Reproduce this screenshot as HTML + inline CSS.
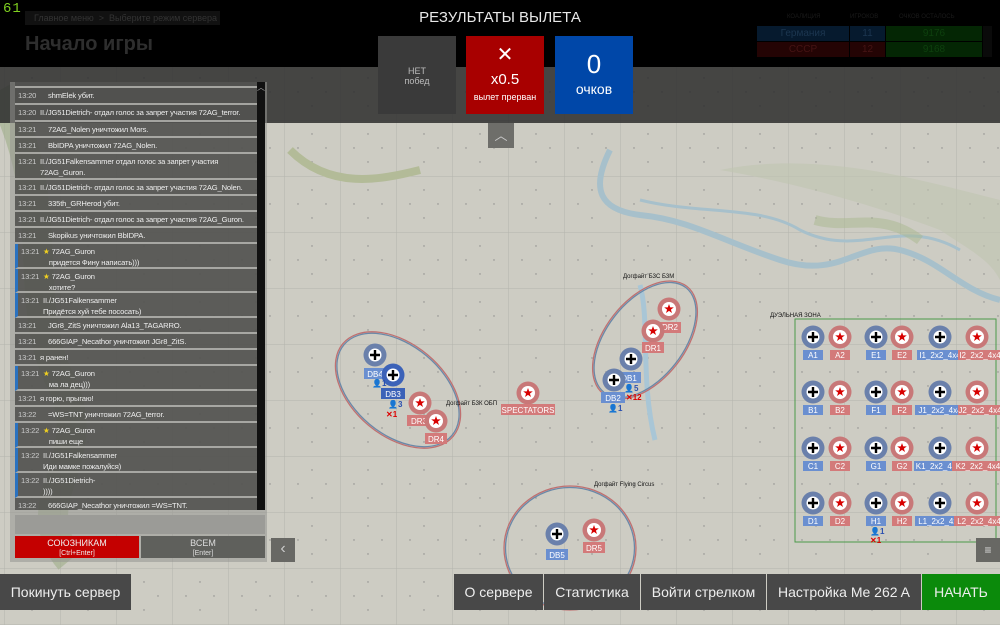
<!DOCTYPE html>
<html><head><meta charset="utf-8"><style>
*{margin:0;padding:0;box-sizing:border-box}
body{width:1000px;height:625px;overflow:hidden;background:#cdccc3;font-family:"Liberation Sans","DejaVu Sans",sans-serif;position:relative}
.abs{position:absolute}
#chat{position:absolute;left:10px;top:82px;width:257px;height:480px;background:rgba(150,150,145,0.55)}
.rows{position:absolute;left:5px;top:0;width:242px;height:428px;overflow:hidden}
.r{position:absolute;left:0;width:242px;background:rgba(75,75,72,0.82);border-bottom:2px solid rgba(200,200,195,0.7);color:#eee;font-size:7.6px;letter-spacing:-0.15px;line-height:11px;padding:2px 0 0 3px}
.r.b{border-left:3px solid #2a72c0}
.r .t{position:absolute;left:3px;color:#ccc}
.r .m{position:absolute;left:33px;white-space:nowrap}
.r .m2{position:absolute;left:25px;white-space:nowrap}
.s{color:#f0d020}
.btn{position:absolute;top:574px;height:36px;background:#484848;color:#eee;font-size:14px;line-height:36px;text-align:center}
</style></head><body>
<svg class="abs" style="left:0;top:0" width="1000" height="625">
<defs><pattern id="g" width="56" height="56" patternUnits="userSpaceOnUse" x="4" y="8"><path d="M0 0H56M0 0V56" stroke="#b4b4ac" stroke-width="1" fill="none"/><circle cx="14" cy="28" r=".7" fill="#888"/><circle cx="42" cy="28" r=".7" fill="#888"/><circle cx="28" cy="14" r=".7" fill="#888"/><circle cx="28" cy="42" r=".7" fill="#888"/></pattern></defs>
<rect width="1000" height="625" fill="url(#g)"/>
<path d="M0 90 C60 200 20 300 60 380 S20 500 70 560" stroke="#9fae88" stroke-width="30" fill="none" opacity=".6"/>
<path d="M290 150 C330 190 380 180 420 170" stroke="#b3bb98" stroke-width="8" fill="none"/>
<path d="M610 150 C590 190 600 210 640 215 C690 220 720 240 780 260 C840 280 860 240 900 250 C940 260 960 290 1000 300" stroke="#a7c0cb" stroke-width="6" fill="none"/>
<path d="M640 200 C700 215 760 205 800 230 C860 260 900 215 960 250" stroke="#a7c0cb" stroke-width="3" fill="none"/>
<path d="M720 170 C780 180 860 200 940 230 C970 250 990 260 1000 280 L1000 200 C920 180 820 150 720 170Z" fill="#bfc4b0" opacity=".6"/>
<path d="M815 220 C850 230 880 210 920 240" stroke="#aab890" stroke-width="10" fill="none" opacity=".5"/>
<path d="M640 285 C650 320 640 380 655 440" stroke="#a9c6d6" stroke-width="5" fill="none"/>
<g fill="none" stroke-width="1.3">
<ellipse cx="398" cy="390" rx="72" ry="46" transform="rotate(40 398 390)" stroke="#c07070"/>
<ellipse cx="398" cy="390" rx="70.5" ry="44.5" transform="rotate(40 398 390)" stroke="#6a88a8"/>
<ellipse cx="645" cy="340" rx="68" ry="40" transform="rotate(-52 645 340)" stroke="#c07070"/>
<ellipse cx="645" cy="340" rx="66.5" ry="38.5" transform="rotate(-52 645 340)" stroke="#6a88a8"/>
<ellipse cx="570" cy="548" rx="66" ry="62" stroke="#c07070"/>
<ellipse cx="570" cy="548" rx="64.5" ry="60.5" stroke="#6a88a8"/>
</g>
<rect x="795" y="319" width="201" height="223" fill="none" stroke="#4a9a4a" stroke-width="1"/>
<rect x="0" y="67" width="1000" height="56" fill="rgba(45,45,45,0.85)"/>
<rect x="0" y="0" width="1000" height="67" fill="#000"/>
</svg>

<div class="abs" style="left:3px;top:1px;color:#7fd020;font-family:'Liberation Mono',monospace;font-size:14px;letter-spacing:1px">61</div>
<div class="abs" style="left:25px;top:11px;width:195px;height:14px;background:#111;color:#333;font-size:9px;line-height:14px;padding-left:9px;white-space:nowrap;overflow:hidden">Главное меню &nbsp;&gt;&nbsp; Выберите режим сервера</div>
<div class="abs" style="left:25px;top:33px;color:#2e2e2e;font-size:20px;font-weight:bold">Начало игры</div>
<div class="abs" style="left:0;top:9px;width:1000px;text-align:center;color:#e8e8e8;font-size:15px">РЕЗУЛЬТАТЫ ВЫЛЕТА</div>
<div class="abs" style="left:378px;top:36px;width:78px;height:78px;background:#3a3a3a;color:#bbb;font-size:9px;text-align:center;padding-top:30px;line-height:10px">НЕТ<br>побед</div>
<div class="abs" style="left:466px;top:36px;width:78px;height:78px;background:#a80000;color:#fff;text-align:center"><div style="font-size:20px;margin-top:9px;line-height:20px">✕</div><div style="font-size:15px;margin-top:6px">x0.5</div><div style="font-size:9px;margin-top:4px">вылет прерван</div></div>
<div class="abs" style="left:555px;top:36px;width:78px;height:78px;background:#0047a8;color:#fff;text-align:center"><div style="font-size:26px;margin-top:13px;line-height:30px">0</div><div style="font-size:14px;margin-top:2px">очков</div></div>
<div class="abs" style="left:757px;top:14px;font-size:6px;color:#1a1a1a;width:240px"><span style="position:absolute;left:30px">КОАЛИЦИЯ</span><span style="position:absolute;left:93px">ИГРОКОВ</span><span style="position:absolute;left:142px">ОЧКОВ ОСТАЛОСЬ</span></div>
<div class="abs" style="left:757px;top:26px;width:92px;height:15px;background:#061a2e;color:#1c3650;font-size:10px;text-align:center;line-height:15px">Германия</div>
<div class="abs" style="left:850px;top:26px;width:35px;height:15px;background:#061a2e;color:#1c3650;font-size:10px;text-align:center;line-height:15px">11</div>
<div class="abs" style="left:886px;top:26px;width:96px;height:15px;background:#042604;color:#0e400e;font-size:10px;text-align:center;line-height:15px">9176</div>
<div class="abs" style="left:757px;top:42px;width:92px;height:15px;background:#240404;color:#461414;font-size:10px;text-align:center;line-height:15px">СССР</div>
<div class="abs" style="left:850px;top:42px;width:35px;height:15px;background:#240404;color:#461414;font-size:10px;text-align:center;line-height:15px">12</div>
<div class="abs" style="left:886px;top:42px;width:96px;height:15px;background:#042604;color:#0e400e;font-size:10px;text-align:center;line-height:15px">9168</div>
<div class="abs" style="left:983px;top:26px;width:9px;height:31px;background:#0a0a0a"></div>

<div class="abs" style="left:488px;top:123px;width:26px;height:25px;background:#6e6e6a;color:#ccc;text-align:center;font-size:13px;line-height:26px">︿</div>

<div id="chat">
<div class="rows">
<div class="r" style="top:-6px;height:12px"></div>
<div class="r" style="top:6px;height:17px"><span class="t">13:20</span><span class="m">shmElek убит.</span></div>
<div class="r" style="top:23px;height:17px"><span class="t">13:20</span><span class="m2">II./JG51Dietrich- отдал голос за запрет участия 72AG_terror.</span></div>
<div class="r" style="top:40px;height:16px"><span class="t">13:21</span><span class="m">72AG_Nolen уничтожил Mors.</span></div>
<div class="r" style="top:56px;height:16px"><span class="t">13:21</span><span class="m">BbIDPA уничтожил 72AG_Nolen.</span></div>
<div class="r" style="top:72px;height:26px"><span class="t">13:21</span><span class="m2">II./JG51Falkensammer отдал голос за запрет участия<br>72AG_Guron.</span></div>
<div class="r" style="top:98px;height:16px"><span class="t">13:21</span><span class="m2">II./JG51Dietrich- отдал голос за запрет участия 72AG_Nolen.</span></div>
<div class="r" style="top:114px;height:16px"><span class="t">13:21</span><span class="m">335th_GRHerod убит.</span></div>
<div class="r" style="top:130px;height:16px"><span class="t">13:21</span><span class="m2">II./JG51Dietrich- отдал голос за запрет участия 72AG_Guron.</span></div>
<div class="r" style="top:146px;height:16px"><span class="t">13:21</span><span class="m">Skopikus уничтожил BbIDPA.</span></div>
<div class="r b" style="top:162px;height:25px"><span class="t">13:21</span><span class="m2"><span class="s">★</span> 72AG_Guron<br>&nbsp;&nbsp;&nbsp;придется Фину написать)))</span></div>
<div class="r b" style="top:187px;height:24px"><span class="t">13:21</span><span class="m2"><span class="s">★</span> 72AG_Guron<br>&nbsp;&nbsp;&nbsp;хотите?</span></div>
<div class="r b" style="top:211px;height:25px"><span class="t">13:21</span><span class="m2">II./JG51Falkensammer<br>Придётся хуй тебе пососать)</span></div>
<div class="r" style="top:236px;height:16px"><span class="t">13:21</span><span class="m">JGr8_ZitS уничтожил Ala13_TAGARRO.</span></div>
<div class="r" style="top:252px;height:16px"><span class="t">13:21</span><span class="m">666GIAP_Necathor уничтожил JGr8_ZitS.</span></div>
<div class="r" style="top:268px;height:16px"><span class="t">13:21</span><span class="m2">я ранен!</span></div>
<div class="r b" style="top:284px;height:25px"><span class="t">13:21</span><span class="m2"><span class="s">★</span> 72AG_Guron<br>&nbsp;&nbsp;&nbsp;ма ла дец)))</span></div>
<div class="r" style="top:309px;height:16px"><span class="t">13:21</span><span class="m2">я горю, прыгаю!</span></div>
<div class="r" style="top:325px;height:16px"><span class="t">13:22</span><span class="m">=WS=TNT уничтожил 72AG_terror.</span></div>
<div class="r b" style="top:341px;height:25px"><span class="t">13:22</span><span class="m2"><span class="s">★</span> 72AG_Guron<br>&nbsp;&nbsp;&nbsp;пиши еще</span></div>
<div class="r b" style="top:366px;height:25px"><span class="t">13:22</span><span class="m2">II./JG51Falkensammer<br>Иди мамке пожалуйся)</span></div>
<div class="r b" style="top:391px;height:25px"><span class="t">13:22</span><span class="m2">II./JG51Dietrich-<br>))))</span></div>
<div class="r" style="top:416px;height:16px"><span class="t">13:22</span><span class="m">666GIAP_Necathor уничтожил =WS=TNT.</span></div>
</div>
<div class="abs" style="left:247px;top:0;width:8px;height:428px;background:#111"><div style="color:#aaa;font-size:8px;text-align:center">︿</div></div>
<div class="abs" style="left:5px;top:433px;width:250px;height:19px;background:#9b9b97"></div>
<div class="abs" style="left:5px;top:454px;width:124px;height:22px;background:#c40000;color:#eee;text-align:center;font-size:9px;line-height:9px;padding-top:3px">СОЮЗНИКАМ<br><span style="font-size:7px">[Ctrl+Enter]</span></div>
<div class="abs" style="left:131px;top:454px;width:124px;height:22px;background:#5f605c;color:#ddd;text-align:center;font-size:9px;line-height:9px;padding-top:3px">ВСЕМ<br><span style="font-size:7px">[Enter]</span></div>
</div>
<div class="abs" style="left:271px;top:538px;width:24px;height:24px;background:#686864;color:#ccc;text-align:center;font-size:16px;line-height:22px">‹</div>
<div class="abs" style="left:976px;top:538px;width:24px;height:24px;background:#686864;color:#ddd;text-align:center;font-size:12px;line-height:24px">≡</div>

<svg class="abs" style="left:0;top:0" width="1000" height="625" font-family="Liberation Sans, sans-serif">
<defs>
<g id="bl"><circle r="11.5" fill="#6a80ab"/><circle r="6.5" fill="#fff"/><path d="M0 -5V5M-5 0H5" stroke="#000" stroke-width="2.4"/></g>
<g id="bl2"><circle r="11.5" fill="#3c62b8"/><circle r="6.5" fill="#fff"/><path d="M0 -5V5M-5 0H5" stroke="#000" stroke-width="2.4"/></g>
<g id="rd"><circle r="11.5" fill="#c87878"/><circle r="7" fill="#fff"/><path d="M0 -5L1.2 -1.6 4.8 -1.6 1.9 0.6 3 4 0 1.9 -3 4 -1.9 0.6 -4.8 -1.6 -1.2 -1.6Z" fill="#d80000"/></g>
</defs>
<g font-size="8" fill="#fff" text-anchor="middle">
<use href="#bl" x="375" y="355"/><rect x="364" y="368" width="22" height="11" fill="#6a8fd0"/><text x="375" y="377">DB4</text>
<use href="#bl2" x="393" y="375"/><rect x="381" y="388" width="24" height="11" fill="#3c62b8"/><text x="393" y="397">DB3</text>
<use href="#rd" x="420" y="403"/><rect x="407" y="415" width="24" height="11" fill="#d37a7a"/><text x="419" y="424">DR3</text>
<use href="#rd" x="436" y="421"/><rect x="425" y="433" width="22" height="11" fill="#d37a7a"/><text x="436" y="442">DR4</text>
<use href="#rd" x="528" y="393"/><rect x="501" y="404" width="54" height="11" fill="#d37a7a"/><text x="528" y="413">SPECTATORS</text>
<use href="#rd" x="669" y="309"/><rect x="657" y="322" width="24" height="11" fill="#d37a7a"/><text x="670" y="330">DR2</text>
<use href="#rd" x="653" y="331"/><rect x="642" y="342" width="22" height="11" fill="#d37a7a"/><text x="653" y="351">DR1</text>
<use href="#bl" x="631" y="359"/><rect x="617" y="372" width="24" height="11" fill="#6a8fd0"/><text x="629" y="381">DB1</text>
<use href="#bl" x="614" y="380"/><rect x="601" y="392" width="24" height="11" fill="#6a8fd0"/><text x="613" y="401">DB2</text>
<use href="#bl" x="557" y="534"/><rect x="546" y="549" width="22" height="11" fill="#6a8fd0"/><text x="557" y="558">DB5</text>
<use href="#rd" x="594" y="530"/><rect x="583" y="542" width="22" height="11" fill="#d37a7a"/><text x="594" y="551">DR5</text>
</g>
<g font-size="8" font-weight="bold">
<text x="372" y="386" fill="#2a50b0">👤1</text><text x="388" y="407" fill="#2a50b0">👤3</text><text x="386" y="417" fill="#d00">✕1</text>
<text x="624" y="391" fill="#2a50b0">👤5</text><text x="626" y="400" fill="#d00">✕12</text><text x="608" y="411" fill="#2a50b0">👤1</text>
<text x="870" y="534" fill="#2a50b0">👤1</text><text x="870" y="543" fill="#d00">✕1</text>
</g>
<g font-size="6" fill="#111">
<text x="446" y="405">Догфайт Б3К ОБП</text>
<text x="623" y="278">Догфайт Б3С Б3М</text>
<text x="594" y="486">Догфайт Flying Circus</text>
<text x="770" y="317">ДУЭЛЬНАЯ ЗОНА</text>
</g>
<g font-size="8" fill="#fff" text-anchor="middle">
<use href="#bl" x="813" y="337"/><rect x="803" y="350" width="20" height="10" fill="#6a8fd0"/><text x="813" y="358">A1</text>
<use href="#rd" x="840" y="337"/><rect x="830" y="350" width="20" height="10" fill="#d37a7a"/><text x="840" y="358">A2</text>
<use href="#bl" x="876" y="337"/><rect x="866" y="350" width="20" height="10" fill="#6a8fd0"/><text x="876" y="358">E1</text>
<use href="#rd" x="902" y="337"/><rect x="892" y="350" width="20" height="10" fill="#d37a7a"/><text x="902" y="358">E2</text>
<use href="#bl" x="940" y="337"/><rect x="917" y="350" width="46" height="10" fill="#6a8fd0"/><text x="940" y="358">I1_2x2_4x4</text>
<use href="#rd" x="977" y="337"/><rect x="958" y="350" width="42" height="10" fill="#d37a7a"/><text x="980" y="358">I2_2x2_4x4</text>

<use href="#bl" x="813" y="392"/><rect x="803" y="405" width="20" height="10" fill="#6a8fd0"/><text x="813" y="413">B1</text>
<use href="#rd" x="840" y="392"/><rect x="830" y="405" width="20" height="10" fill="#d37a7a"/><text x="840" y="413">B2</text>
<use href="#bl" x="876" y="392"/><rect x="866" y="405" width="20" height="10" fill="#6a8fd0"/><text x="876" y="413">F1</text>
<use href="#rd" x="902" y="392"/><rect x="892" y="405" width="20" height="10" fill="#d37a7a"/><text x="902" y="413">F2</text>
<use href="#bl" x="940" y="392"/><rect x="915" y="405" width="48" height="10" fill="#6a8fd0"/><text x="940" y="413">J1_2x2_4x4</text>
<use href="#rd" x="977" y="392"/><rect x="958" y="405" width="42" height="10" fill="#d37a7a"/><text x="980" y="413">J2_2x2_4x4</text>

<use href="#bl" x="813" y="448"/><rect x="803" y="461" width="20" height="10" fill="#6a8fd0"/><text x="813" y="469">C1</text>
<use href="#rd" x="840" y="448"/><rect x="830" y="461" width="20" height="10" fill="#d37a7a"/><text x="840" y="469">C2</text>
<use href="#bl" x="876" y="448"/><rect x="866" y="461" width="20" height="10" fill="#6a8fd0"/><text x="876" y="469">G1</text>
<use href="#rd" x="902" y="448"/><rect x="892" y="461" width="20" height="10" fill="#d37a7a"/><text x="902" y="469">G2</text>
<use href="#bl" x="940" y="448"/><rect x="914" y="461" width="48" height="10" fill="#6a8fd0"/><text x="938" y="469">K1_2x2_4x4</text>
<use href="#rd" x="977" y="448"/><rect x="952" y="461" width="48" height="10" fill="#d37a7a"/><text x="978" y="469">K2_2x2_4x4</text>

<use href="#bl" x="813" y="503"/><rect x="803" y="516" width="20" height="10" fill="#6a8fd0"/><text x="813" y="524">D1</text>
<use href="#rd" x="840" y="503"/><rect x="830" y="516" width="20" height="10" fill="#d37a7a"/><text x="840" y="524">D2</text>
<use href="#bl" x="876" y="503"/><rect x="866" y="516" width="20" height="10" fill="#6a8fd0"/><text x="876" y="524">H1</text>
<use href="#rd" x="902" y="503"/><rect x="892" y="516" width="20" height="10" fill="#d37a7a"/><text x="902" y="524">H2</text>
<use href="#bl" x="940" y="503"/><rect x="915" y="516" width="48" height="10" fill="#6a8fd0"/><text x="940" y="524">L1_2x2_4x4</text>
<use href="#rd" x="977" y="503"/><rect x="954" y="516" width="46" height="10" fill="#d37a7a"/><text x="979" y="524">L2_2x2_4x4</text>
</g>
</svg>

<div class="btn" style="left:0;width:131px">Покинуть сервер</div>
<div class="btn" style="left:454px;width:89px">О сервере</div>
<div class="btn" style="left:544px;width:96px">Статистика</div>
<div class="btn" style="left:641px;width:125px">Войти стрелком</div>
<div class="btn" style="left:767px;width:154px">Настройка Me 262 A</div>
<div class="btn" style="left:922px;width:78px;background:#0b8a0b">НАЧАТЬ</div>
</body></html>
